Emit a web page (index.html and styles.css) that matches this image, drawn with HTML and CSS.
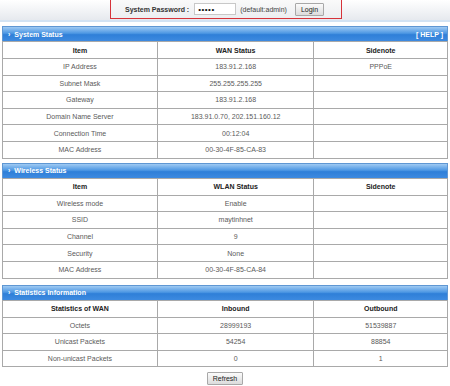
FILE: index.html
```html
<!DOCTYPE html>
<html lang="en">
<head>
  <title>Status</title>
  <meta charset="utf-8">
  <link rel="stylesheet" href="styles.css">
</head>
<body>
    <div class="top-bar">
        <form class="login-box">
            <label class="login-label" for="pwd">System Password :</label>
            <input class="login-input" id="pwd" type="password" value="admin">
            <span class="login-hint">(default:admin)</span>
            <button class="btn" type="button">Login</button>
        </form>
    </div>

    <div class="panel">
        <div class="panel-title">
            <span><span class="arrow">&rsaquo;</span>System Status</span>
            <span class="help">[ HELP ]</span>
        </div>
        <table class="status-table">
            <colgroup><col class="c1"><col class="c2"><col class="c3"></colgroup>
            <tr><th>Item</th><th>WAN Status</th><th>Sidenote</th></tr>
            <tr><td>IP Address</td><td>183.91.2.168</td><td>PPPoE</td></tr>
            <tr><td>Subnet Mask</td><td>255.255.255.255</td><td></td></tr>
            <tr><td>Gateway</td><td>183.91.2.168</td><td></td></tr>
            <tr><td>Domain Name Server</td><td>183.91.0.70, 202.151.160.12</td><td></td></tr>
            <tr><td>Connection Time</td><td>00:12:04</td><td></td></tr>
            <tr><td>MAC Address</td><td>00-30-4F-85-CA-83</td><td></td></tr>
        </table>
    </div>

    <div class="panel">
        <div class="panel-title">
            <span><span class="arrow">&rsaquo;</span>Wireless Status</span>
        </div>
        <table class="status-table">
            <colgroup><col class="c1"><col class="c2"><col class="c3"></colgroup>
            <tr><th>Item</th><th>WLAN Status</th><th>Sidenote</th></tr>
            <tr><td>Wireless mode</td><td>Enable</td><td></td></tr>
            <tr><td>SSID</td><td>maytinhnet</td><td></td></tr>
            <tr><td>Channel</td><td>9</td><td></td></tr>
            <tr><td>Security</td><td>None</td><td></td></tr>
            <tr><td>MAC Address</td><td>00-30-4F-85-CA-84</td><td></td></tr>
        </table>
    </div>

    <div class="panel">
        <div class="panel-title">
            <span><span class="arrow">&rsaquo;</span>Statistics Information</span>
        </div>
        <table class="status-table">
            <colgroup><col class="c1"><col class="c2"><col class="c3"></colgroup>
            <tr><th>Statistics of WAN</th><th>Inbound</th><th>Outbound</th></tr>
            <tr><td>Octets</td><td>28999193</td><td>51539887</td></tr>
            <tr><td>Unicast Packets</td><td>54254</td><td>88854</td></tr>
            <tr><td>Non-unicast Packets</td><td>0</td><td>1</td></tr>
        </table>
    </div>

    <div class="actions">
        <button class="btn" type="button">Refresh</button>
    </div>
</body>
</html>
```

FILE: styles.css
```css
body {
    margin: 0;
    background: #fff;
    font-family: "Liberation Sans", Arial, sans-serif;
    font-size: 7px;
    color: #5a5a5a;
}
.top-bar {
    height: 20px;
    display: flex;
    justify-content: center;
    background: linear-gradient(#ffffff, #e6e9ee);
    border-bottom: 2px solid #d3e3f3;
}
.login-box {
    margin: 0 0 0 2px;
    width: 232px;
    height: 19px;
    box-sizing: border-box;
    display: flex;
    align-items: center;
    padding-left: 14px;
    border: 1px solid #d6333a;
    border-top: 0;
    background: linear-gradient(#fafafa, #eceef1);
}
.login-label {
    font-weight: bold;
    color: #333;
    margin-right: 5px;
}
.login-input {
    width: 42px;
    height: 12px;
    box-sizing: border-box;
    padding: 0 3px;
    border: 1px solid #c8c8c8;
    font-size: 8px;
    letter-spacing: 0.5px;
    color: #111;
    margin-right: 4px;
}
.login-hint {
    color: #444;
    margin-right: 8px;
}
.btn {
    height: 13px;
    padding: 0 5px;
    font-family: inherit;
    font-size: 7px;
    color: #222;
    border: 1px solid #a8a8a8;
    border-radius: 1px;
    background: linear-gradient(#fbfbfb, #dcdcdc);
}
.panel {
    margin: 4px 2px 4px;
}
.panel + .panel + .panel {
    margin-top: 6px;
}
.panel-title {
    height: 14px;
    display: flex;
    justify-content: space-between;
    align-items: center;
    padding: 0 4px 0 5px;
    color: #fff;
    font-weight: bold;
    background: linear-gradient(#9fcaf3, #4d97e3 45%, #2f7fd8 55%, #3d8ae0);
    border: 1px solid #5f97d3;
    border-bottom: 0;
}
.arrow {
    margin-right: 4px;
}
.status-table {
    width: 100%;
    border-collapse: collapse;
    table-layout: fixed;
    background: #fff;
}
.c1 { width: 34.8%; }
.c2 { width: 35.2%; }
.c3 { width: 30%; }
.status-table th,
.status-table td {
    border: 1px solid #a9a9a9;
    text-align: center;
    padding: 0;
}
.status-table th {
    height: 16px;
    color: #222;
    font-weight: bold;
}
.status-table td {
    height: 15.6px;
}
.actions {
    display: flex;
    justify-content: center;
    margin-top: 5px;
}
```
